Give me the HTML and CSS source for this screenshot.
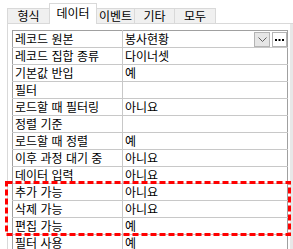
FILE: index.html
```html
<!DOCTYPE html>
<html lang="ko">
<head>
    <meta charset="UTF-8">
    <meta name="viewport" content="width=device-width, initial-scale=1.0">
    <title>속성 시트</title>
    <link rel="stylesheet" href="styles.css">
</head>
<body>
    <div class="tabs">
        <div class="tab">형식</div>
        <div class="tab active">데이터</div>
        <div class="tab">이벤트</div>
        <div class="tab">기타</div>
        <div class="tab">모두</div>
    </div>
    <div class="panel">
        <div class="sheet">
            <table class="props">
                <tr>
                    <td class="name">레코드 원본</td>
                    <td class="value">
                        <div class="combo">
                            <span class="combo-text">봉사현황</span>
                            <span class="drop">
                                <svg width="9" height="5" viewBox="0 0 9 5"><path d="M0.5 0.5 L4.5 4.5 L8.5 0.5" fill="none" stroke="#606060" stroke-width="1"/></svg>
                            </span>
                            <span class="more">
                                <svg width="9" height="3" viewBox="0 0 9 3"><rect x="0" y="0" width="2" height="2" fill="#000"/><rect x="3.5" y="0" width="2" height="2" fill="#000"/><rect x="7" y="0" width="2" height="2" fill="#000"/></svg>
                            </span>
                        </div>
                    </td>
                </tr>
                <tr><td class="name">레코드 집합 종류</td><td class="value">다이너셋</td></tr>
                <tr><td class="name">기본값 반입</td><td class="value">예</td></tr>
                <tr><td class="name">필터</td><td class="value"></td></tr>
                <tr><td class="name">로드할 때 필터링</td><td class="value">아니요</td></tr>
                <tr><td class="name">정렬 기준</td><td class="value"></td></tr>
                <tr><td class="name">로드할 때 정렬</td><td class="value">예</td></tr>
                <tr><td class="name">이후 과정 대기 중</td><td class="value">아니요</td></tr>
                <tr><td class="name">데이터 입력</td><td class="value">아니요</td></tr>
                <tr><td class="name">추가 가능</td><td class="value">아니요</td></tr>
                <tr><td class="name">삭제 가능</td><td class="value">아니요</td></tr>
                <tr><td class="name">편집 가능</td><td class="value">예</td></tr>
                <tr><td class="name">필터 사용</td><td class="value">예</td></tr>
            </table>
        </div>
        <div class="scroll-edge"></div>
    </div>
    <svg class="highlight" width="293" height="249" viewBox="0 0 293 249">
        <rect x="6.5" y="182.5" width="283" height="52" fill="none" stroke="#ff0000" stroke-width="3" stroke-dasharray="6 3"/>
    </svg>
</body>
</html>
```

FILE: styles.css
```css
body {
    margin: 0;
    width: 293px;
    height: 249px;
    overflow: hidden;
    position: relative;
    background-color: #ffffff;
    font-family: "Noto Sans CJK KR", "Noto Sans", sans-serif;
    font-size: 12px;
    color: #000000;
}

.tabs {
    display: flex;
    align-items: flex-end;
    height: 23px;
    padding-left: 7px;
}

.tab {
    box-sizing: border-box;
    height: 15px;
    line-height: 13px;
    padding: 0;
    background-color: #f0f0f0;
    border: 1px solid #d9d9d9;
    border-bottom: none;
    margin-right: -1px;
    text-align: center;
    white-space: nowrap;
}

.tab:nth-child(1) { width: 43px; }
.tab:nth-child(3) { width: 39px; }
.tab:nth-child(4) { width: 41px; }
.tab:nth-child(5) { width: 42px; }

.tab.active {
    width: 48px;
    height: 21px;
    line-height: 18px;
    background-color: #ffffff;
    margin-bottom: -1px;
    position: relative;
}

.panel {
    display: flex;
    margin-left: 7px;
    border-top: 1px solid #d9d9d9;
    border-left: 1px solid #d9d9d9;
    height: 225px;
}

.sheet {
    flex: 1;
    padding: 6px 0 0 4px;
    background-color: #ffffff;
}

.scroll-edge {
    width: 3px;
    margin-left: 2px;
    background-color: #e8e8e8;
}

.props {
    border-collapse: collapse;
    width: 276px;
    table-layout: fixed;
}

.props td {
    height: 16px;
    padding: 0 0 0 2px;
    border: 1px solid #c8c8c8;
    line-height: 16px;
    white-space: nowrap;
    overflow: hidden;
    vertical-align: top;
}

.props tr:first-child td {
    border-top-color: #a0a0a0;
}

.props td:first-child {
    border-left-color: #a0a0a0;
}

.props td:last-child {
    border-right-color: #a0a0a0;
}

.props .name {
    width: 107px;
}

.combo {
    display: flex;
    align-items: center;
    height: 16px;
}

.combo-text {
    flex: 1;
}

.drop,
.more {
    box-sizing: border-box;
    display: flex;
    align-items: center;
    justify-content: center;
    height: 15px;
    border: 1px solid #b4b4b4;
}

.drop {
    width: 16px;
    background-color: #e6e6e6;
    margin-right: 2px;
}

.more {
    width: 15px;
    background-color: #ffffff;
    padding-top: 3px;
}

.highlight {
    position: absolute;
    left: 0;
    top: 0;
}
```
